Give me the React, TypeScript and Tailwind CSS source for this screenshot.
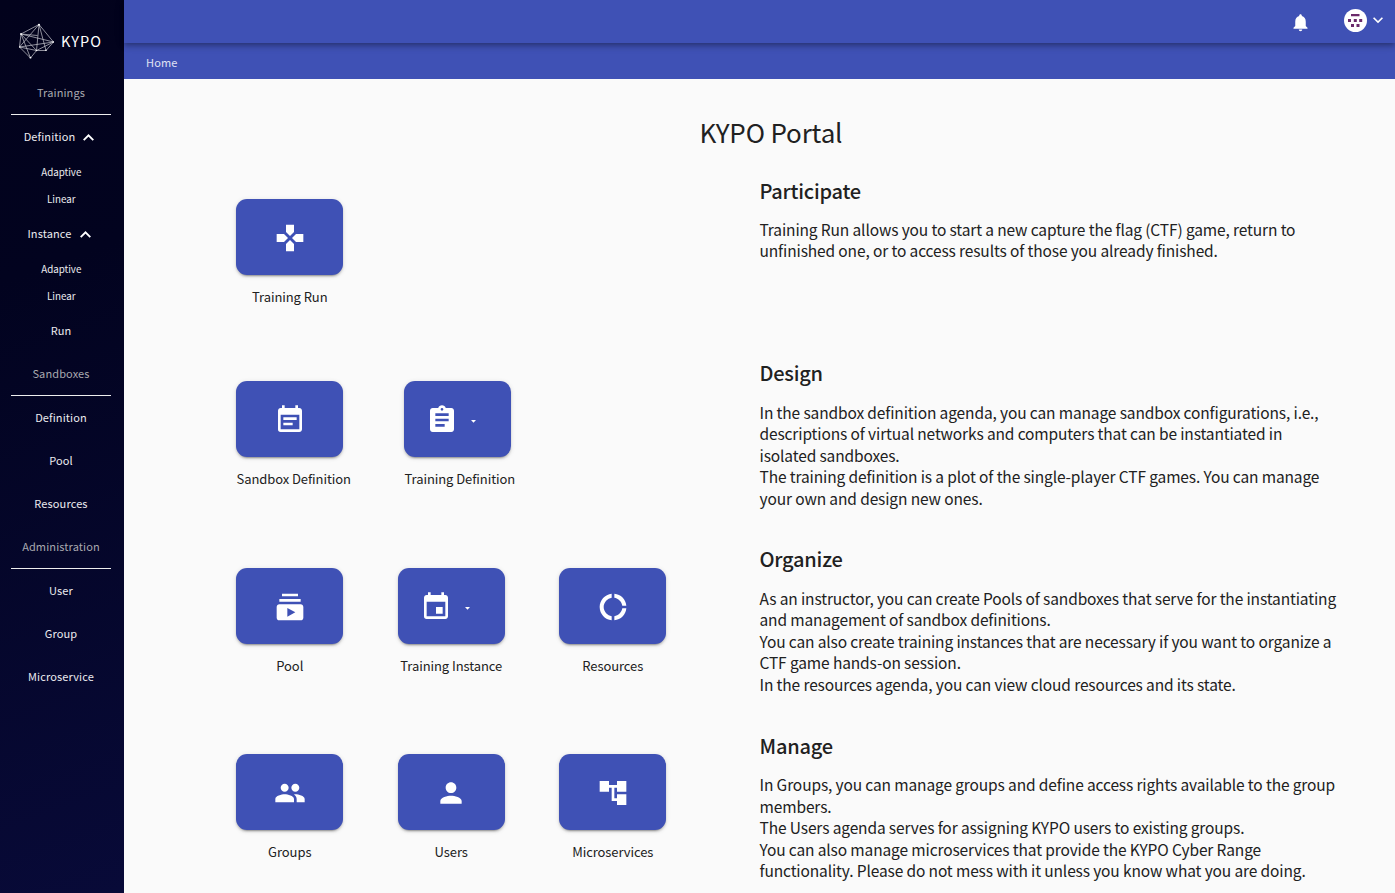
import type { ReactNode } from "react";
import type { IconType } from "react-icons";
import {
  MdAccountTree,
  MdAssignment,
  MdDonutLarge,
  MdEvent,
  MdEventNote,
  MdGamepad,
  MdKeyboardArrowDown,
  MdNotifications,
  MdPeople,
  MdPerson,
  MdSubscriptions,
} from "react-icons/md";

function Logo() {
  return (
    <svg width="38" height="38" viewBox="0 0 38 38" fill="none" stroke="#c8c8d0" strokeWidth="0.7">
      <path d="M21 2.5 3 12 1.5 25 12.5 36 18.5 28.5 28 28.5 35.5 20z" />
      <path d="M21 2.5 1.5 25 18.5 28.5 3 12 35.5 20 18.5 28.5 21 2.5 28 28.5M3 12 19.5 13.5M35.5 20 1.5 25M3 12 12.5 36" />
      <g fill="#fff" stroke="none">
        <circle cx="21" cy="2.7" r="1" />
        <circle cx="3" cy="12" r="0.9" />
        <circle cx="1.8" cy="25" r="0.7" />
        <circle cx="12.5" cy="35.7" r="0.9" />
        <circle cx="18.5" cy="28.5" r="0.8" />
        <circle cx="28" cy="28.3" r="0.8" />
        <circle cx="35.2" cy="20" r="0.8" />
      </g>
    </svg>
  );
}

function Heading({ children }: { children: ReactNode }) {
  return (
    <div className="mx-[11px] flex h-[43px] items-center justify-center border-b border-[#eeeeee] pb-[2px] text-[11px] leading-none tracking-[0.12px] text-[#a9a9af]">
      {children}
    </div>
  );
}

function NavItem({ children, open }: { children: ReactNode; open?: boolean }) {
  return (
    <a
      className={`flex h-[43px] items-center justify-center pb-[3px] text-[11px] leading-none tracking-[0.12px] ${
        open ? "pr-1" : ""
      }`}
    >
      {children}
      {open && (
        <svg
          className="ml-2 mt-[3px]"
          width="11"
          height="7"
          viewBox="0 0 11 7"
          fill="none"
          stroke="#fff"
          strokeWidth="1.9"
        >
          <path d="M.7 6.1 5.5 1.4l4.8 4.7" />
        </svg>
      )}
    </a>
  );
}

function SubItem({ children }: { children: ReactNode }) {
  return (
    <a className="flex h-[26.5px] items-center justify-center pl-[0.5px] pt-[2px] text-[9.8px] leading-none tracking-[-0.03px]">
      {children}
    </a>
  );
}

function Sidebar() {
  return (
    <aside className="h-full w-[124px] shrink-0 bg-[linear-gradient(160deg,#02021c_0%,#02031f_30%,#080a38_100%)] text-[#ececf0]">
      <div className="flex h-[72px] items-center gap-[5px] pl-[18px] pt-[10px]">
        <Logo />
        <span className="text-[14.5px] leading-none tracking-[1.1px] text-white">KYPO</span>
      </div>
      <nav className="w-[122px]">
        <Heading>Trainings</Heading>
        <div className="pt-px">
          <NavItem open>Definition</NavItem>
          <SubItem>Adaptive</SubItem>
          <SubItem>Linear</SubItem>
          <div className="h-px" />
          <NavItem open>Instance</NavItem>
          <SubItem>Adaptive</SubItem>
          <SubItem>Linear</SubItem>
          <div className="pt-px">
            <NavItem>Run</NavItem>
          </div>
        </div>
        <Heading>Sandboxes</Heading>
        <div className="pt-px">
          <NavItem>Definition</NavItem>
          <NavItem>Pool</NavItem>
          <NavItem>Resources</NavItem>
        </div>
        <Heading>Administration</Heading>
        <div className="pt-px">
          <NavItem>User</NavItem>
          <NavItem>Group</NavItem>
          <NavItem>Microservice</NavItem>
        </div>
      </nav>
    </aside>
  );
}

function Avatar() {
  return (
    <svg className="-mt-[2px]" width="23" height="23" viewBox="0 0 23 23">
      <circle cx="11.5" cy="11.5" r="11.5" fill="#fff" />
      <path
        fill="#6b2a6b"
        d="M7 5h8.5v2.3H7zM4 10h3v3H4zM9.8 10h3v3h-3zM15.2 10h3v3h-3zM7 15h3v3H7zM12.5 15h3v3h-3z"
      />
    </svg>
  );
}

type Tile = { label: string; icon: IconType; menu?: boolean };

function AgendaTile({ label, icon: Icon, menu }: Tile) {
  return (
    <div className="w-[107px]">
      <button
        className={`flex h-[76px] w-[107px] items-center justify-center rounded-[11px] bg-[#3f51b5] pt-[2px] text-white shadow-[0_3px_1px_-2px_rgba(0,0,0,0.2),0_2px_2px_0_rgba(0,0,0,0.14),0_1px_5px_0_rgba(0,0,0,0.12)] ${
          menu ? "pr-[13px]" : ""
        }`}
      >
        <Icon className="size-8 shrink-0" />
        {menu && (
          <svg className="ml-[13px] mt-[2px]" width="5" height="3" viewBox="0 0 5 3" fill="#fff">
            <path d="M0 0h5L2.5 2.8z" />
          </svg>
        )}
      </button>
      <div className="mt-3 h-5 whitespace-nowrap pl-[0.5px] text-center text-[13px] leading-5 tracking-[-0.08px]">
        {label}
      </div>
    </div>
  );
}

function Section({
  title,
  tiles,
  rowClass,
  tilesClass,
  textClass,
  children,
}: {
  title: string;
  tiles: Tile[];
  rowClass: string;
  tilesClass: string;
  textClass: string;
  children: ReactNode;
}) {
  return (
    <section className={`flex ${rowClass}`}>
      <div className={`flex w-[523.5px] shrink-0 ${tilesClass}`}>
        {tiles.map((t) => (
          <AgendaTile key={t.label} {...t} />
        ))}
      </div>
      <div className="w-[600px] shrink-0">
        <h2 className="h-8 text-[20px] font-medium leading-8 tracking-[-0.22px]">{title}</h2>
        <p className={`whitespace-nowrap text-[15.5px] leading-[21.5px] tracking-[-0.124px] ${textClass}`}>
          {children}
        </p>
      </div>
    </section>
  );
}

export default function App() {
  return (
    <div className="flex h-[893px] w-[1395px] overflow-hidden bg-[#fafafa] font-['Noto_Sans_CJK_SC',sans-serif] text-[#212121]">
      <Sidebar />
      <div className="flex min-w-0 flex-1 flex-col">
        <header className="z-10 flex h-[43px] shrink-0 items-center justify-end bg-[#3f51b5] pr-[7px] text-white shadow-[0_2px_4px_-1px_rgba(0,0,0,0.2),0_4px_5px_0_rgba(0,0,0,0.14),0_1px_10px_0_rgba(0,0,0,0.12)]">
          <MdNotifications className="mr-[33px] mt-px size-[21px]" />
          <Avatar />
          <MdKeyboardArrowDown className="-mt-[3px] ml-px size-[20px]" />
        </header>
        <div className="flex h-9 shrink-0 items-center bg-[#3f51b5] pl-[22px] pt-[3px] text-[11px] leading-none tracking-[0.15px] text-[#e0e3f4]">
          Home
        </div>
        <main className="flex-1 overflow-hidden pl-[112px]">
          <h1 className="h-24 pl-[463.5px] pt-[33px] text-[26px] leading-10 tracking-[-0.15px]">KYPO Portal</h1>
          <Section
            title="Participate"
            rowClass="h-[182px]"
            tilesClass="pt-6"
            textClass="mt-[11.75px]"
            tiles={[{ label: "Training Run", icon: MdGamepad }]}
          >
            Training Run allows you to start a new capture the flag (CTF) game, return to
            <br />
            unfinished one, or to access results of those you already finished.
          </Section>
          <Section
            title="Design"
            rowClass="h-[186px]"
            tilesClass="gap-[61px] pt-6"
            textClass="mt-[12.75px]"
            tiles={[
              { label: "Sandbox Definition", icon: MdEventNote },
              { label: "Training Definition", icon: MdAssignment, menu: true },
            ]}
          >
            In the sandbox definition agenda, you can manage sandbox configurations, i.e.,
            <br />
            descriptions of virtual networks and computers that can be instantiated in
            <br />
            isolated sandboxes.
            <br />
            The training definition is a plot of the single-player CTF games. You can manage
            <br />
            your own and design new ones.
          </Section>
          <Section
            title="Organize"
            rowClass="h-[187px]"
            tilesClass="gap-[54.5px] pt-[25px]"
            textClass="mt-[12.75px]"
            tiles={[
              { label: "Pool", icon: MdSubscriptions },
              { label: "Training Instance", icon: MdEvent, menu: true },
              { label: "Resources", icon: MdDonutLarge },
            ]}
          >
            As an instructor, you can create Pools of sandboxes that serve for the instantiating
            <br />
            and management of sandbox definitions.
            <br />
            You can also create training instances that are necessary if you want to organize a
            <br />
            CTF game hands-on session.
            <br />
            In the resources agenda, you can view cloud resources and its state.
          </Section>
          <Section
            title="Manage"
            rowClass="h-[163px]"
            tilesClass="gap-[54.5px] pt-6"
            textClass="mt-3"
            tiles={[
              { label: "Groups", icon: MdPeople },
              { label: "Users", icon: MdPerson },
              { label: "Microservices", icon: MdAccountTree },
            ]}
          >
            In Groups, you can manage groups and define access rights available to the group
            <br />
            members.
            <br />
            The Users agenda serves for assigning KYPO users to existing groups.
            <br />
            You can also manage microservices that provide the KYPO Cyber Range
            <br />
            functionality. Please do not mess with it unless you know what you are doing.
          </Section>
        </main>
      </div>
    </div>
  );
}
